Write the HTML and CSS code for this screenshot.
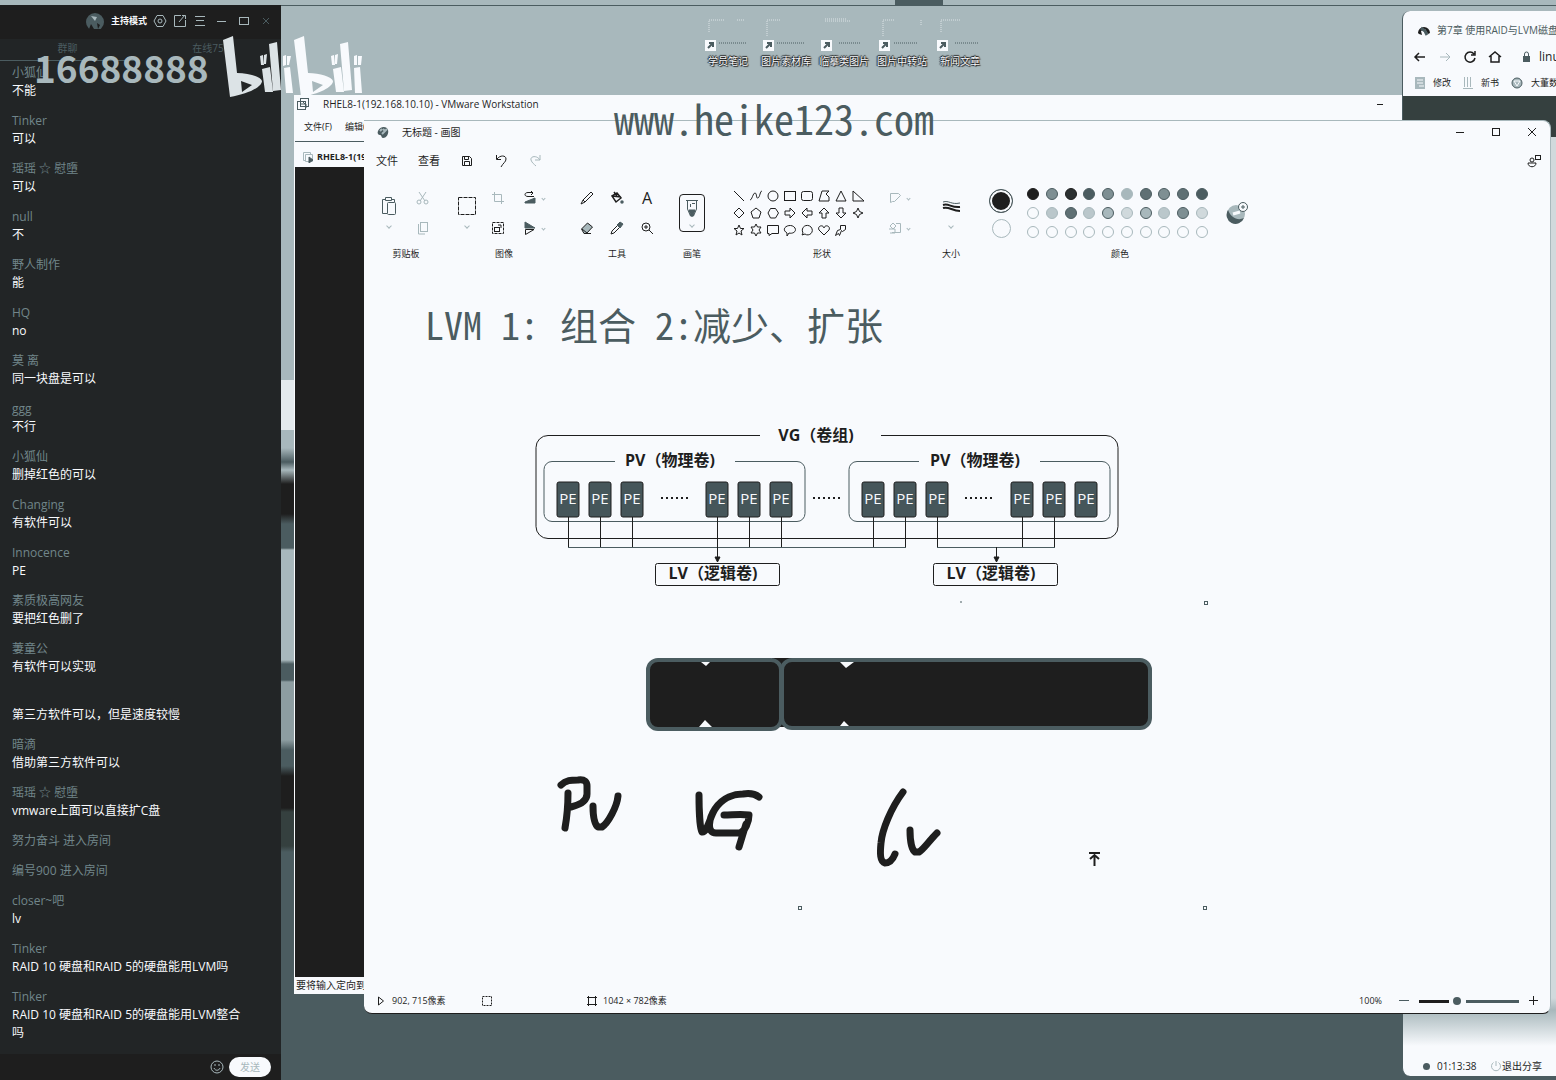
FILE: index.html
```html
<!DOCTYPE html>
<html lang="zh-CN">
<head>
<meta charset="utf-8">
<meta name="viewport" content="width=device-width, initial-scale=1">
<title>无标题 - 画图</title>
<link rel="stylesheet" href="styles.css">
</head>
<body>
<main class="desktop">
  <div class="wallpaper-edge"></div>
  <div class="share-line"><span class="share-tab"></span></div>

  <nav class="shortcuts" aria-label="桌面">
    <a class="shortcut" href="#"><svg class="badge" width="60" height="44"><path class="ghost" d="M8 16V4h16M36 4h8"/><path class="dots" d="M18 27h27"/><rect class="tile" x="4" y="24" width="11" height="11"/><path class="arrow" d="M7 32l5-5M8 27h4v4"/></svg><span>学员笔记</span></a>
    <a class="shortcut" href="#"><svg class="badge" width="60" height="44"><path class="ghost" d="M8 20V4h14"/><path class="dots" d="M18 27h27"/><rect class="tile" x="4" y="24" width="11" height="11"/><path class="arrow" d="M7 32l5-5M8 27h4v4"/></svg><span>图片素材库</span></a>
    <a class="shortcut" href="#"><svg class="badge" width="60" height="44"><path class="ghost" d="M8 5h26M8 3h22"/><path class="dots" d="M22 27h21"/><rect class="tile" x="4" y="24" width="11" height="11"/><path class="arrow" d="M7 32l5-5M8 27h4v4"/></svg><span>临摹类图片</span></a>
    <a class="shortcut" href="#"><svg class="badge" width="60" height="44"><path class="ghost" d="M8 20V4h12M46 4v6"/><path class="dots" d="M19 27h24"/><rect class="tile" x="4" y="24" width="11" height="11"/><path class="arrow" d="M7 32l5-5M8 27h4v4"/></svg><span>图片中转站</span></a>
    <a class="shortcut" href="#"><svg class="badge" width="60" height="44"><path class="ghost" d="M8 16V4h20"/><path class="dots" d="M22 27h24"/><rect class="tile" x="4" y="24" width="11" height="11"/><path class="arrow" d="M7 32l5-5M8 27h4v4"/></svg><span>新闻文章</span></a>
  </nav>

  <section class="vm" aria-label="VMware Workstation">
    <header class="vm-title">
      <svg width="14" height="14" class="ico slate"><rect x="1.500" y="4.500" width="8" height="8"/><rect x="4.500" y="1.500" width="8" height="8"/><path d="M4 7h6v4M6 4l3 3"/></svg>
      <span>RHEL8-1(192.168.10.10) - VMware Workstation</span>
      <button class="vm-min" aria-label="最小化"></button>
    </header>
    <div class="vm-menu"><a href="#">文件(F)</a><a href="#">编辑(E)</a></div>
    <div class="vm-tab"><svg width="12" height="12" class="ico pale"><path d="M3.500 9.500h-2v-8h7v2M3.500 3.500h7v7h-7z"/><path class="fill" d="M7 6l4 3-4 3z"/></svg><b>RHEL8-1(192.168.10.10)</b></div>
    <div class="vm-screen"></div>
    <footer class="vm-status">要将输入定向到该虚拟机，请在虚拟机内部单击</footer>
  </section>

  <section class="browser" aria-label="浏览器">
    <div class="b-tab">
      <svg width="14" height="14"><path d="M1 10a6 6 0 1 1 12 0l-2 1-3-5-4 2 1 4-3-1z" fill="#1e1e1e"/><path d="M4 5l4 3 2 4" stroke="#4b5c60" stroke-width="3" fill="none"/></svg>
      <span>第7章 使用RAID与LVM磁盘阵列技术</span>
    </div>
    <div class="b-nav">
      <button aria-label="后退"><svg width="14" height="14" class="ico bold"><path d="M12 7H2M6 3L2 7l4 4"/></svg></button>
      <button aria-label="前进"><svg width="14" height="14" class="ico pale"><path d="M2 7h10M8 3l4 4-4 4"/></svg></button>
      <button aria-label="刷新"><svg width="14" height="14" class="ico bold"><path d="M12 8a5 5 0 1 1-1-4M12 1v4H8"/></svg></button>
      <button aria-label="主页"><svg width="14" height="14" class="ico bold"><path d="M1 7l6-5 6 5M3 6v6h8V6"/></svg></button>
      <svg width="14" height="14" class="lock"><rect x="4" y="6" width="7" height="6" fill="#4b5c60"/><path d="M5.500 6V4a2 2 0 0 1 4 0v2" stroke="#4b5c60" fill="none"/></svg>
      <span class="b-url">linuxprobe.com</span>
    </div>
    <div class="b-marks">
      <svg width="10" height="12"><rect width="10" height="12" fill="#a8b8bc"/><path d="M2 3h6M2 6h6M4 9h5" stroke="#f8fafd"/></svg><a href="#">修改</a>
      <svg width="10" height="12" stroke="#a8b8bc" fill="none"><path d="M1.500 0v10M4.500 0v10M7.500 0v10M0 11.500h10"/></svg><a href="#">新书</a>
      <svg width="12" height="12"><circle cx="6" cy="6" r="5" fill="#a8b8bc" stroke="#4b5c60"/><path d="M3 4h6L6 9z" fill="none" stroke="#f8fafd"/></svg><a href="#">大董数据</a>
    </div>
    <div class="b-page"></div>
    <footer class="b-foot">
      <i class="rec"></i><span class="clock">01:13:38</span>
      <button class="leave"><svg width="12" height="12" class="ico pale"><path d="M3.500 2.500a4.500 4.500 0 1 0 5 0M6 1v5"/></svg>退出分享</button>
    </footer>
  </section>

  <section class="paint" aria-label="画图">
    <header class="p-title">
      <svg width="14" height="14"><path d="M2 6c2-5 9-5 10-1 1 3-1 8-5 8-2 0-1-3-3-3s-3-2-2-4z" fill="#4b5c60"/><path d="M4 6l2-2M7 4l2 2M6 9l5-5" stroke="#a8b8bc" stroke-width="2"/></svg>
      <span class="grow">无标题 - 画图</span>
      <button aria-label="最小化"><svg width="12" height="12" class="ico"><path d="M2 6.500h8"/></svg></button>
      <button aria-label="最大化"><svg width="12" height="12" class="ico"><rect x="2.500" y="2.500" width="7" height="7"/></svg></button>
      <button aria-label="关闭"><svg width="12" height="12" class="ico"><path d="M2 2l8 8M10 2l-8 8"/></svg></button>
    </header>
    <div class="p-menu">
      <button class="word">文件</button>
      <button class="word">查看</button>
      <button aria-label="保存"><svg width="14" height="14" class="ico"><path d="M2.500 2.500h7l2 2v7h-9zM4.500 2.500v3h4v-3M4.500 11.500v-4h5v4"/></svg></button>
      <button aria-label="撤消"><svg width="14" height="14" class="ico"><path d="M2.500 1v4.500H7M3 5c3-4 9-4 9 0 0 3-3 4-5 8"/></svg></button>
      <button aria-label="重做"><svg width="14" height="14" class="ico pale"><path d="M12 1v5H7M12 6C9 1 2 2 3 6c1 3 3 4 5 6"/></svg></button>
      <button class="account" aria-label="帐户"><svg width="16" height="16" class="ico"><rect x="9.500" y="2.500" width="5" height="4"/><circle cx="6" cy="7" r="2"/><path d="M2 10h8c0 5-8 5-8 0z"/></svg></button>
    </div>

    <div class="ribbon">
      <div class="group g-clip">
        <div class="tools">
          <button class="tall" aria-label="粘贴"><svg width="18" height="20" class="ico slate"><path d="M6 3.500H2.500v14H7M11 3.500h3.500V6M5.500 1.500h6v3h-6z"/><rect x="7.500" y="6.500" width="8" height="12" rx="1"/></svg><i class="chev"></i></button>
          <button aria-label="剪切"><svg width="14" height="14" class="ico pale"><path d="M3 1l6 9M10 1L4 10"/><circle cx="3" cy="11" r="2"/><circle cx="10" cy="11" r="2"/></svg></button>
          <button aria-label="复制"><svg width="14" height="14" class="ico pale"><rect x="4.500" y="1.500" width="7" height="9"/><path d="M2.500 3v10H9"/></svg></button>
        </div><span class="label">剪贴板</span>
      </div>
      <div class="group g-image">
        <div class="tools">
          <button class="tall" aria-label="选择"><svg width="18" height="20" class="ico"><rect x=".5" y="1.500" width="17" height="17" stroke-dasharray="4 1"/></svg><i class="chev"></i></button>
          <button aria-label="裁剪"><svg width="14" height="14" class="ico pale"><path d="M3.500 1v9.500H13M1 3.500h9.500V13"/></svg></button>
          <button class="drop" aria-label="旋转"><svg width="14" height="14" class="ico"><path d="M11 5.500H5c-4 0-4-4 0-4h5M8 0l2 2-2 2"/><path class="fill" d="M2 11l10-4v5H2z"/></svg><i class="chev"></i></button>
          <button aria-label="调整大小"><svg width="14" height="14" class="ico"><rect x="1.500" y="1.500" width="11" height="11" stroke-dasharray="3 1"/><rect x="3.500" y="6.500" width="5" height="4"/><path d="M7 4h3v3"/></svg></button>
          <button class="drop" aria-label="翻转"><svg width="14" height="14" class="ico"><path class="fill" d="M2 1l10 6H2z"/><path d="M2.500 8.500v5L11 8.500z"/></svg><i class="chev"></i></button>
        </div><span class="label">图像</span>
      </div>
      <div class="group g-tools">
        <div class="tools">
          <button aria-label="铅笔"><svg width="14" height="14" class="ico"><path d="M1 13l2-4 8-8 2 2-8 8zM3 9l2 2"/></svg></button>
          <button aria-label="填充"><svg width="14" height="14" class="ico bold"><path d="M2 5l5-3 4 5-5 4zM2 5l9 1M4 1l3 4"/><circle class="fill" cx="12" cy="11" r="1"/></svg></button>
          <button class="letter" aria-label="文本">A</button>
          <button aria-label="橡皮擦"><svg width="14" height="14"><path d="M1.500 8l6-6 5 4-6 6.500H4z" fill="#a8b8bc" stroke="#1e1e1e"/><path d="M2 8l5 4M6 12.500h5" stroke="#1e1e1e"/></svg></button>
          <button aria-label="颜色选取器"><svg width="14" height="14" class="ico"><path d="M1 13l1-3 6-6 2 2-6 6z"/><path class="fill" d="M7 4l3-3 3 2-3 4z"/></svg></button>
          <button aria-label="放大镜"><svg width="14" height="14" class="ico"><circle cx="6" cy="6" r="4"/><path d="M9 9l4 4M4 6h4M6 4v4"/></svg></button>
        </div><span class="label">工具</span>
      </div>
      <div class="group g-brush">
        <div class="tools"><button class="brush" aria-label="画笔"><svg width="14" height="20" class="ico slate"><path d="M1 1.500h12M2.500 2v8l3 7h3l3-7V2"/><path class="fill" d="M4 11h6l-2 6H6z"/><path d="M5.500 5v3M7 4.500h3"/></svg><i class="chev"></i></button></div>
        <span class="label">画笔</span>
      </div>
      <div class="group g-shapes">
        <div class="tools">
          <div class="shapes">
            <svg class="ico"><path d="M2 2l10 10"/></svg>
            <svg class="ico"><path d="M1 11c2 0 3-7 5-7s1 6 3 5 2-7 4-7"/></svg>
            <svg class="ico"><circle cx="7" cy="7" r="5"/></svg>
            <svg class="ico"><rect x="1.500" y="2.500" width="11" height="9"/></svg>
            <svg class="ico"><rect x="1.500" y="2.500" width="11" height="9" rx="2"/></svg>
            <svg class="ico"><path d="M5 2h7L9 5l3 3v4H2z"/></svg>
            <svg class="ico"><path d="M7 2l5 10H2z"/></svg>
            <svg class="ico"><path d="M2 2l11 10H2z"/></svg>
            <svg class="ico"><path d="M7 2l5 5-5 5-5-5z"/></svg>
            <svg class="ico"><path d="M7 2l5 4-2 6H4L2 6z"/></svg>
            <svg class="ico"><path d="M4.500 2.500h5l3 4.500-3 5h-5L2 7z"/></svg>
            <svg class="ico"><path d="M2 5h5V2l5 5-5 5V9H2z"/></svg>
            <svg class="ico"><path d="M12 5H7V2L2 7l5 5V9h5z"/></svg>
            <svg class="ico"><path d="M5 12V7H2l5-5 5 5H9v5z"/></svg>
            <svg class="ico"><path d="M5 2v5H2l5 5 5-5H9V2z"/></svg>
            <svg class="ico"><path d="M7 2l1.500 3.500L12 7 8.500 8.500 7 12 5.500 8.500 2 7l3.500-1.500z"/></svg>
            <svg class="ico"><path d="M7 2l1.500 3.500H12L9 8l1 4-3-2-3 2 1-4-3-2.500h3.500z"/></svg>
            <svg class="ico"><path d="M7 1l1.500 3H12l-2 3 2 3H8.500L7 13l-1.500-3H2l2-3-2-3h3.500z"/></svg>
            <svg class="ico"><path d="M1.500 2.500h11v8H6l-3 2v-2H1.500z"/></svg>
            <svg class="ico"><path d="M4 10c-8-5 4-11 8-5 2 4-3 6-6 5l-2 3z"/></svg>
            <svg class="ico"><path d="M3 10C0 4 7 0 11 4c4 5-2 10-6 7l-3 1z"/></svg>
            <svg class="ico"><path d="M7 12L2 7c-2-4 4-6 5-2 1-4 7-2 5 2z"/></svg>
            <svg class="ico"><path d="M6.500 2.500h5v4l-3 2-1-1-2 5-1-2-3 2 2-5 3-1z"/></svg>
          </div>
          <div class="shape-opts">
            <button class="drop" aria-label="形状轮廓"><svg width="14" height="14" class="ico pale"><path d="M2.500 2.500h8l2 2-6 6h-2l-2 1z"/></svg><i class="chev"></i></button>
            <button class="drop" aria-label="形状填充"><svg width="14" height="14" class="ico pale"><path d="M2 5l3-3 3 3-3 3zM8 2.500h4.500v9H4M1 8h6v4H2"/></svg><i class="chev"></i></button>
          </div>
        </div><span class="label">形状</span>
      </div>
      <div class="group g-size">
        <div class="tools"><button class="tall" aria-label="大小"><svg width="20" height="20"><path d="M2 6c6-2 8 3 17 1" stroke="#4b5c60" fill="none"/><path d="M2 9c6-2 8 3 17 2M2 12c6-2 9 3 17 3" stroke="#1e1e1e" stroke-width="2" fill="none"/></svg><i class="chev"></i></button></div>
        <span class="label">大小</span>
      </div>
      <div class="group g-color">
        <div class="tools">
          <div class="current"><button class="c1" aria-label="颜色 1"></button><button class="c2" aria-label="颜色 2"></button></div>
          <div class="palette">
            <button class="sw k" aria-label="黑色"></button><button class="sw m" aria-label="灰色"></button><button class="sw k2" aria-label="深红"></button><button class="sw d" aria-label="红色"></button><button class="sw m" aria-label="橙色"></button><button class="sw l" aria-label="黄色"></button><button class="sw d2" aria-label="绿色"></button><button class="sw m" aria-label="青绿"></button><button class="sw d2" aria-label="靛蓝"></button><button class="sw d" aria-label="紫色"></button>
            <button class="sw w" aria-label="白色"></button><button class="sw l2" aria-label="浅灰"></button><button class="sw d2" aria-label="褐色"></button><button class="sw l2" aria-label="玫瑰色"></button><button class="sw l edge" aria-label="金色"></button><button class="sw l3" aria-label="浅黄"></button><button class="sw l edge" aria-label="酸橙色"></button><button class="sw l2" aria-label="淡青绿"></button><button class="sw m" aria-label="蓝灰"></button><button class="sw l3" aria-label="淡紫"></button>
            <button class="sw w" aria-label="自定义 1"></button><button class="sw w" aria-label="自定义 2"></button><button class="sw w" aria-label="自定义 3"></button><button class="sw w" aria-label="自定义 4"></button><button class="sw w" aria-label="自定义 5"></button><button class="sw w" aria-label="自定义 6"></button><button class="sw w" aria-label="自定义 7"></button><button class="sw w" aria-label="自定义 8"></button><button class="sw w" aria-label="自定义 9"></button><button class="sw w" aria-label="自定义 10"></button>
          </div>
          <button class="edit" aria-label="编辑颜色"><svg width="24" height="24"><circle cx="11" cy="13" r="9" fill="#a8b8bc"/><path d="M3 9a9 9 0 1 0 16 8c-6 3-13 0-16-8z" fill="#4b5c60"/><path d="M8 13l7-2" stroke="#f8fafd" stroke-width="3"/><circle cx="18" cy="6" r="4.500" fill="#f8fafd" stroke="#4b5c60"/><path d="M16 6h4M18 4v4" stroke="#4b5c60"/></svg></button>
        </div><span class="label">颜色</span>
      </div>
    </div>

    <div class="board">
      <svg class="drawing" width="880" height="680">
        <g class="note"><text x="61" y="72">LVM 1: </text><text x="196" y="72">组合 2:减少、扩张</text></g>
        <g class="frames">
          <path d="M396 167.500H184a12 12 0 0 0-12 12v79a12 12 0 0 0 12 12h558a12 12 0 0 0 12-12v-79a12 12 0 0 0-12-12H517"/>
          <path class="thin" d="M251 193.500H188a8 8 0 0 0-8 8v44a8 8 0 0 0 8 8h245a8 8 0 0 0 8-8v-44a8 8 0 0 0-8-8h-62"/>
          <path class="thin" d="M555 193.500h-62a8 8 0 0 0-8 8v44a8 8 0 0 0 8 8h245a8 8 0 0 0 8-8v-44a8 8 0 0 0-8-8h-62"/>
        </g>
        <g class="wires">
          <path d="M204.500 249v30M236.500 249v30M268.500 249v30M385.500 249v30M417.500 249v30M509.500 249v30M541.500 249v30M573.500 249v30M658.500 249v30M690.500 249v30"/>
          <path class="thin" d="M204 279.500h338M573 279.500h118"/>
          <path d="M353.500 249v41M632.500 279v11"/>
          <path class="tip" d="M351 289h5l-2.500 5zM630 289h5l-2.500 5z"/>
          <rect x="291.500" y="295.500" width="124" height="22" rx="2"/><rect x="569.500" y="295.500" width="124" height="22" rx="2"/>
        </g>
        <g class="pe"><rect x="193" y="214"/><rect x="225" y="214"/><rect x="257" y="214"/><rect x="342" y="214"/><rect x="374" y="214"/><rect x="406" y="214"/><rect x="498" y="214"/><rect x="530" y="214"/><rect x="562" y="214"/><rect x="647" y="214"/><rect x="679" y="214"/><rect x="711" y="214"/></g>
        <g class="pe-text"><text x="204" y="236">PE</text><text x="236" y="236">PE</text><text x="268" y="236">PE</text><text x="353" y="236">PE</text><text x="385" y="236">PE</text><text x="417" y="236">PE</text><text x="509" y="236">PE</text><text x="541" y="236">PE</text><text x="573" y="236">PE</text><text x="658" y="236">PE</text><text x="690" y="236">PE</text><text x="722" y="236">PE</text></g>
        <path class="ellipsis" d="M297 230h30M449 230h30M601 230h30"/>
        <g class="cap"><text x="452" y="173">VG（卷组)</text><text x="306" y="198">PV（物理卷)</text><text x="611" y="198">PV（物理卷)</text><text x="349" y="311">LV（逻辑卷)</text><text x="627" y="311">LV（逻辑卷)</text></g>
        <path d="M408 390h20v8h-20zM408 452h20v7h-20z" fill="#1e1e1e"/>
        <g class="disk"><rect x="284" y="392" width="133" height="69" rx="10"/><rect x="418" y="392" width="368" height="68" rx="10"/></g>
        <path d="M337 394h9l-4 4zM335 459l6-7 7 7zM476 394h14l-8 6zM476 458l4-5 5 5z" fill="#f8fafd"/>
        <g class="ink">
          <path d="M197 517c5-5 10-5 17-5 7-1 9 2 9 6v8c0 8-8 11-16 13M204 525c0 12-1 24-3 35"/>
          <path d="M229 538c0 8 1 18 5 21h4c6-4 15-20 16-31"/>
          <path d="M335 527c0 15 1 34 3 37 5 1 8-15 13-23 8-12 20-15 28-15 6-1 11-1 16 3M351 541c-6 9-9 24 1 24h24c5-2 9-11 9-18-8-1-17 0-25 0M382 556l-7 23"/>
          <path d="M539 524c-12 16-21 38-22 51-1 10-1 19 4 20 5 0 8-4 10-9M546 562c0 12 2 20 5 22h4c4-2 10-11 18-19"/>
        </g>
        <path d="M725 585h11M730.500 598v-11M726 591l4.500-4 4.500 4" class="pointer"/>
        <g class="handles"><rect x="840.500" y="333.500" width="3" height="3"/><rect x="434.500" y="638.500" width="3" height="3"/><rect x="839.500" y="638.500" width="3" height="3"/><path d="M596 334h2"/></g>
      </svg>
    </div>

    <footer class="p-status">
      <span class="pos"><svg width="10" height="10" class="ico"><path d="M2.500 1v8l5-4z"/></svg>902, 715像素</span>
      <span class="sel"><svg width="10" height="10" class="ico"><rect x=".5" y=".5" width="9" height="9" stroke-dasharray="2 1"/></svg></span>
      <span class="size"><svg width="10" height="10" class="ico"><path d="M1.500 0v10M8.500 0v10M0 1.500h10M0 8.500h10"/></svg>1042 × 782像素</span>
      <label class="zoom" for="zoom">100%</label>
      <button class="step" aria-label="缩小"><svg width="10" height="10" class="ico slate"><path d="M0 4.500h10"/></svg></button>
      <input id="zoom" type="range" min="0" max="100" value="37">
      <button class="step" aria-label="放大"><svg width="10" height="10" class="ico"><path d="M0 4.500h9M4.500 0v9"/></svg></button>
    </footer>
  </section>

  <aside class="chat" aria-label="群聊">
    <header class="c-head">
      <svg width="20" height="16"><circle cx="10" cy="9" r="9" fill="#4b5c60"/><path d="M4 16l2-5 3 5zM12 10l3 2-2 4z" fill="#1e1e1e"/><path d="M6 3l6 1-2 4z" fill="#a8b8bc"/></svg>
      <b>主持模式</b>
      <button aria-label="设置"><svg width="14" height="14" class="ico line"><path d="M4 1.500h6L13 7l-3 5.500H4L1 7z"/><circle cx="7" cy="7" r="2"/></svg></button>
      <button aria-label="弹出"><svg width="14" height="14" class="ico line"><path d="M8 1.500H1.500v11h11V6M6 8l6-7M9 1.500h3.500V5"/></svg></button>
      <button aria-label="菜单"><svg width="14" height="14" class="ico line"><path d="M2 2.500h10M3 6.500h8M2 11.500h10"/></svg></button>
      <button aria-label="最小化"><svg width="14" height="14" class="ico line"><path d="M2 7.500h9"/></svg></button>
      <button aria-label="最大化"><svg width="14" height="14" class="ico line"><rect x="2.500" y="3.500" width="9" height="7"/></svg></button>
      <button aria-label="关闭"><svg width="14" height="14" class="ico slate"><path d="M4 4l6 6M10 4l-6 6"/></svg></button>
    </header>
    <div class="c-tabs"><a class="on" href="#">群聊</a><a href="#">在线75</a></div>
    <ul class="log">
      <li><span>小狐仙</span><p>不能</p></li>
      <li><span>Tinker</span><p>可以</p></li>
      <li><span>瑶瑶 ☆ 慰墮</span><p>可以</p></li>
      <li><span>null</span><p>不</p></li>
      <li><span>野人制作</span><p>能</p></li>
      <li><span>HQ</span><p>no</p></li>
      <li><span>莫 离</span><p>同一块盘是可以</p></li>
      <li><span>ggg</span><p>不行</p></li>
      <li><span>小狐仙</span><p>删掉红色的可以</p></li>
      <li><span>Changing</span><p>有软件可以</p></li>
      <li><span>Innocence</span><p>PE</p></li>
      <li><span>素质极高网友</span><p>要把红色删了</p></li>
      <li><span>萋童公</span><p>有软件可以实现</p></li>
      <li><span>&nbsp;</span><p>第三方软件可以，但是速度较慢</p></li>
      <li><span>暗滴</span><p>借助第三方软件可以</p></li>
      <li><span>瑶瑶 ☆ 慰墮</span><p>vmware上面可以直接扩C盘</p></li>
      <li><span>努力奋斗 进入房间</span></li>
      <li><span>编号900 进入房间</span></li>
      <li><span>closer~吧</span><p>lv</p></li>
      <li><span>Tinker</span><p>RAID 10 硬盘和RAID 5的硬盘能用LVM吗</p></li>
      <li><span>Tinker</span><p>RAID 10 硬盘和RAID 5的硬盘能用LVM整合吗</p></li>
    </ul>
    <footer class="c-foot">
      <button aria-label="表情"><svg width="14" height="14" class="ico line"><circle cx="7" cy="7" r="6"/><path d="M4 8c1 3 5 3 6 0M4 5h2M8 5h2"/></svg></button>
      <button class="send">发送</button>
    </footer>
  </aside>

  <div class="mark-id">16688888</div>
  <svg class="mark-logo" width="140" height="62" role="img" aria-label="bilibili">
    <defs><g id="bili">
      <path fill-rule="evenodd" d="M0 4l10-4 4 37c12 0 24 4 25 8 0 6-14 13-32 16zM18 45l1 11 10-7z"/>
      <path d="M37 20l3-1 1 10h-3zM41 19l3-1-1 10h-2zM39 33l8-2 3 25h-8zM46 8l8-2 4 48-8 1z"/>
    </g></defs>
    <use href="#bili" class="tint"/><path d="M60 20l3-1v10l-3 1zM64 20h4l-2 9h-2zM61 32l6-1 3 26h-7z"/>
    <use href="#bili" x="71"/><path d="M131 20l3-1v10h-3zM135 20h4l-1 9h-3zM131 32l6-1 2 26h-7z"/>
  </svg>
  <div class="mark-site">www.heike123.com</div>
</main>
</body>
</html>
```
FILE: styles.css
```css
:root {
  --ink: #1e1e1e;
  --slate: #4b5c60;
  --mist: #a8b8bc;
  --paper: #f8fafd;
}
* { box-sizing: border-box; }
body {
  margin: 0;
  font: 10px/14px "Open Sans", "Noto Sans CJK SC", sans-serif;
  color: var(--ink);
}
button { border: 0; padding: 0; margin: 0; background: none; font: inherit; color: inherit; display: flex; align-items: center; justify-content: center; }
a { color: inherit; text-decoration: none; }
svg { display: block; flex: none; }
.ico { fill: none; stroke: var(--ink); }
.ico .fill { fill: var(--slate); stroke: var(--slate); }
.bold { stroke-width: 1.5; }
.pale, .line { stroke: var(--mist); }
.slate { stroke: var(--slate); }
.grow { flex: 1; }

/* desktop */
.desktop {
  position: relative;
  height: 100vh;
  min-height: 1080px;
  overflow: hidden;
  background: linear-gradient(var(--mist) 0 600px, var(--slate) 900px);
}
.wallpaper-edge {
  position: absolute; left: 281px; width: 14px; top: 380px; bottom: 0;
  background: linear-gradient(#e4eaed 0 50px, var(--mist) 50px 68px, var(--slate) 82px, var(--mist) 90px, var(--ink) 104px 134px, var(--slate) 144px 168px, var(--mist) 170px 280px, var(--slate) 284px 300px, #8d9da1 302px 360px, var(--slate) 370px 386px, var(--ink) 396px 428px, #35403f 432px 466px, var(--slate) 472px);
}
.share-line { position: absolute; left: 281px; right: 0; top: 0; height: 6px; border-bottom: 1px solid var(--slate); }
.share-tab { display: block; width: 48px; height: 5px; margin-left: 614px; background: var(--slate); }

.shortcuts { position: absolute; left: 699px; top: 16px; display: flex; }
.shortcut { width: 58px; display: flex; flex-direction: column; align-items: center; color: var(--paper); font-size: 10px; line-height: 12px; text-shadow: 0 0 1px #1e1e1e, 1px 1px 1px #1e1e1e, -1px 0 1px #1e1e1e, 0 -1px 1px #1e1e1e; white-space: nowrap; }
.badge { height: 39px; margin-left: 6px; }
.ghost { fill: none; stroke: #dce3e6; stroke-dasharray: 1 1; }
.dots { stroke: var(--slate); stroke-dasharray: 1 1; }
.tile { fill: var(--paper); }
.arrow { fill: none; stroke: var(--slate); stroke-width: 2; }

/* virtual machine window */
.vm { position: absolute; left: 294px; right: 153px; top: 95px; bottom: 86px; background: var(--paper); border-left: 1px solid var(--paper); display: flex; flex-direction: column; }
.vm-title { height: 18px; display: flex; align-items: center; gap: 13px; padding: 0 20px 0 1px; font-size: 10px; }
.vm-title span { flex: 1; }
.vm-min { width: 6px; height: 1px; background: var(--ink); }
.vm-menu { height: 28px; display: flex; align-items: center; gap: 13px; padding: 0 9px; font-size: 9px; }
.vm-tab { height: 26px; display: flex; align-items: center; gap: 3px; padding: 4px 7px 0; border-top: 1px solid var(--slate); font-size: 9px; }
.vm-screen { flex: 1; background: var(--ink); }
.vm-status { height: 17px; font-size: 10px; line-height: 17px; padding-left: 1px; overflow: hidden; }

/* browser window */
.browser { position: absolute; left: 1402px; right: 0; top: 11px; bottom: 4px; background: var(--paper); border-left: 1px solid var(--slate); border-radius: 8px 0 0 8px; overflow: hidden; display: flex; flex-direction: column; min-width: 153px; }
.b-tab { height: 34px; display: flex; align-items: center; gap: 6px; padding: 4px 0 0 14px; white-space: nowrap; color: var(--slate); }
.b-nav { height: 24px; display: flex; align-items: center; gap: 11px; padding-left: 10px; }
.lock { margin-left: 6px; }
.b-url { font-size: 12px; margin-left: -5px; }
.b-marks { height: 27px; display: flex; align-items: center; gap: 8px; padding-left: 12px; font-size: 9px; white-space: nowrap; }
.b-marks svg:not(:first-child) { margin-left: 4px; }
.b-page { flex: 1; background: linear-gradient(#35403f 41px, #d0d9dc 41px calc(100% - 48px), var(--mist) calc(100% - 36px), var(--paper) 100%); }
.b-foot { height: 30px; display: flex; align-items: center; padding: 10px 14px 0 20px; white-space: nowrap; }
.rec { width: 7px; height: 7px; border-radius: 50%; background: var(--slate); }
.clock { margin-left: 7px; flex: 1; }

/* paint window */
.paint { position: absolute; left: 364px; right: 5px; top: 120px; bottom: 66px; background: var(--paper); border: 1px solid var(--mist); border-left: 0; border-bottom-color: var(--ink); border-radius: 0 8px 8px 8px; display: flex; flex-direction: column; }
.p-title { height: 22px; display: flex; align-items: center; gap: 12px; padding: 0 12px; }
.p-title button { width: 24px; height: 20px; }
.p-title button:last-child { margin-right: -6px; }
.p-menu { height: 33px; display: flex; align-items: center; gap: 20px; padding: 2px 8px 0 12px; }
.p-menu .word { font-size: 11px; width: 22px; }
.account { margin-left: auto; }

.ribbon { display: flex; gap: 8px; padding: 7px 12px 0; height: 92px; }
.group { display: flex; flex-direction: column; gap: 2px; }
.tools { height: 60px; display: grid; justify-content: start; }
.label { line-height: 18px; font-size: 9px; text-align: center; }
.chev { width: 4px; height: 4px; border: solid var(--mist); border-width: 0 1px 1px 0; transform: rotate(45deg); }
.tall { grid-row: span 2; flex-direction: column; gap: 8px; padding-bottom: 2px; }
.drop { gap: 5px; }
.drop .chev { width: 3px; height: 3px; }
.g-clip { width: 60px; }
.g-clip .tools { grid-template: 1fr 1fr / 26px 26px; column-gap: 8px; grid-auto-flow: column; }
.g-image { width: 120px; }
.g-image .tools { grid-template: 1fr 1fr / 46px 16px 56px; }
.g-tools { width: 90px; }
.g-tools .tools { grid-template: 1fr 1fr / 30px 30px 30px; }
.letter { font-size: 16px; }
.g-brush { width: 44px; }
.g-brush .tools { justify-content: center; align-content: center; }
.brush { width: 26px; height: 38px; border: 1px solid var(--ink); border-radius: 4px; flex-direction: column; gap: 4px; }
.g-shapes { width: 200px; }
.g-shapes .tools { grid-template-columns: 136px 48px; padding-left: 8px; align-content: center; }
.shapes { display: grid; grid-template: repeat(3, 17px) / repeat(8, 17px); place-items: center; }
.shapes svg { width: 14px; height: 14px; }
.shape-opts { display: grid; grid-template-rows: 30px 30px; margin: -4px 0; padding-left: 17px; }
.g-size { width: 42px; }
.g-size .tools { grid-template-columns: 42px; }
.g-color { width: 280px; }
.g-color .tools { grid-template-columns: 42px 187px 48px; column-gap: 2px; align-items: center; }
.current { display: flex; flex-direction: column; align-items: center; gap: 6px; }
.c1 { width: 24px; height: 24px; border: 1px solid var(--slate); border-radius: 50%; background: var(--ink); box-shadow: inset 0 0 0 2px var(--paper); }
.c2 { width: 19px; height: 19px; border: 1px solid var(--mist); border-radius: 50%; }
.palette { display: grid; grid-template: repeat(3, 19px) / repeat(10, 1fr); place-items: center; }
.sw { width: 12px; height: 12px; border-radius: 50%; border: 1px solid var(--slate); }
.sw.k { background: var(--ink); border-color: var(--ink); }
.sw.k2 { background: #2b3031; border-color: var(--ink); }
.sw.d { background: var(--slate); }
.sw.d2 { background: #5f7074; }
.sw.m { background: #7e8f93; }
.sw.l { background: var(--mist); border-color: var(--mist); }
.sw.edge { border-color: var(--slate); }
.sw.l2 { background: #bac7cb; border-color: var(--mist); }
.sw.l3 { background: #d0d9dc; border-color: var(--mist); }
.sw.w { border-color: var(--mist); }

.board { flex: 1; overflow: hidden; }
.drawing { max-width: none; }
.note { fill: var(--slate); font: 38px "Noto Sans Mono CJK SC", "Liberation Mono", monospace; white-space: pre; }
.frames { fill: none; stroke: var(--ink); }
.thin { stroke: var(--slate); }
.wires { fill: none; stroke: var(--ink); }
.wires .tip { fill: var(--ink); }
.pe rect { width: 22px; height: 35px; rx: 2px; fill: #46565a; stroke: var(--ink); }
.pe-text { fill: var(--paper); font-size: 15px; text-anchor: middle; }
.ellipsis { stroke: var(--ink); stroke-width: 2; stroke-dasharray: 2 3; fill: none; }
.cap { font-size: 16px; font-weight: 700; text-anchor: middle; fill: var(--ink); }
.disk { fill: var(--ink); stroke: var(--slate); stroke-width: 4; }
.ink { fill: none; stroke: var(--ink); stroke-width: 7; stroke-linecap: round; stroke-linejoin: round; }
.pointer { fill: none; stroke: var(--ink); stroke-width: 2; }
.handles { fill: none; stroke: var(--slate); }

.p-status { height: 24px; display: flex; align-items: center; font-size: 9px; padding: 0 11px 0 12px; white-space: nowrap; }
.p-status span { display: flex; align-items: center; gap: 6px; }
.pos { width: 106px; }
.sel { width: 105px; }
.zoom { margin-left: auto; margin-right: 17px; }
.step { width: 10px; height: 10px; }
#zoom { appearance: none; width: 100px; height: 10px; margin: 0 10px; background: none; }
#zoom::-webkit-slider-runnable-track { height: 3px; background: linear-gradient(90deg, var(--ink) 30px, var(--paper) 30px 47px, var(--slate) 47px); }
#zoom::-webkit-slider-thumb { appearance: none; width: 8px; height: 8px; margin-top: -3px; border-radius: 50%; background: var(--slate); }

/* chat window */
.chat { position: absolute; left: 0; top: 5px; bottom: 0; width: 281px; background: #222526; color: var(--paper); display: flex; flex-direction: column; font-size: 12px; line-height: 18px; }
.c-head { height: 34px; background: var(--ink); display: flex; align-items: center; justify-content: flex-end; gap: 6px; padding: 0 8px 2px; }
.c-head b { font-size: 9px; }
.c-head button:nth-last-child(-n+3) { margin-left: 2px; }
.c-tabs { height: 22px; display: flex; justify-content: space-around; font-size: 10px; color: var(--slate); border-bottom: 1px solid transparent; border-image: linear-gradient(90deg, var(--slate) 140px, transparent 140px) 1; }
.log { list-style: none; margin: 0; padding: 3px 32px 0 12px; flex: 1; display: flex; flex-direction: column; gap: 12px; }
.log span { display: block; color: #71858a; }
.log p { margin: 0; word-break: break-all; }
.c-foot { height: 26px; background: var(--ink); display: flex; align-items: center; justify-content: flex-end; gap: 5px; padding: 0 10px; }
.send { width: 42px; height: 20px; border-radius: 10px; background: var(--paper); color: var(--mist); font-size: 10px; }

/* watermarks */
.mark-id { position: absolute; left: 34px; top: 47px; font: 700 37px/40px "Noto Sans CJK SC", sans-serif; color: var(--mist); }
.mark-logo { position: absolute; left: 223px; top: 36px; fill: var(--paper); }
.tint { fill: #dce3e6; }
.mark-site { position: absolute; left: 614px; top: 96px; font: 40px/44px "Noto Sans Mono CJK SC", "Liberation Mono", monospace; color: var(--slate); }
```
